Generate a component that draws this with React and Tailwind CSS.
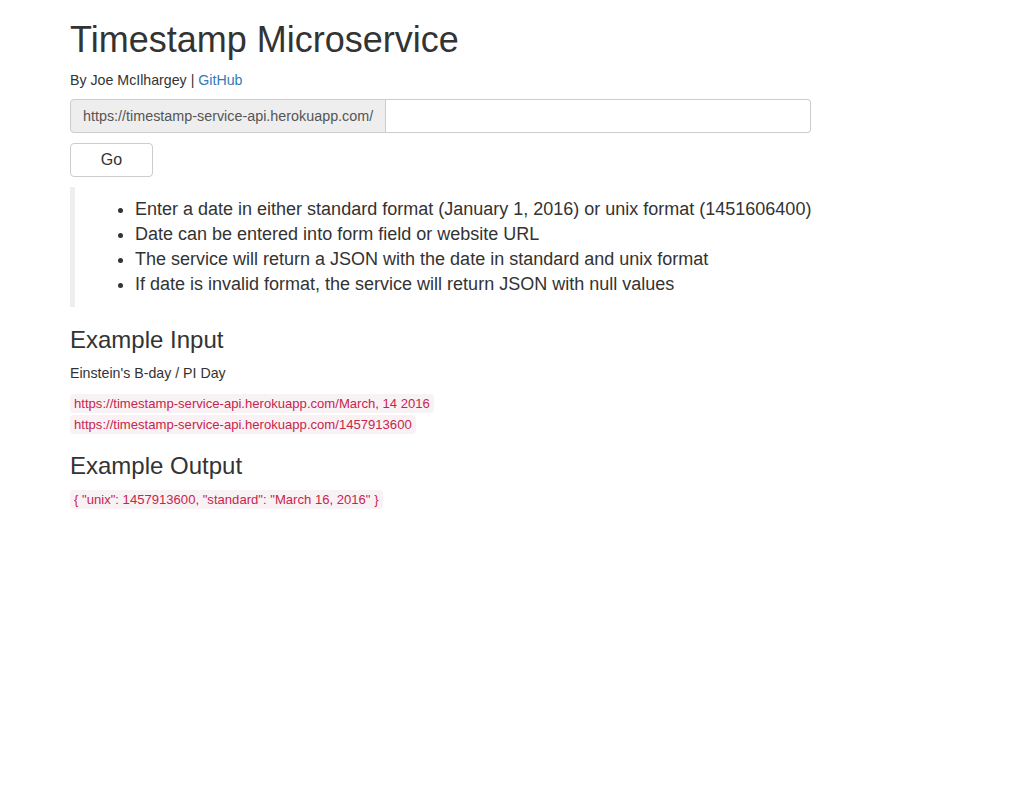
import React, { useState } from 'react';

const sans = { fontFamily: '"Liberation Sans", Arial, sans-serif' };

const rules = [
    'Enter a date in either standard format (January 1, 2016) or unix format (1451606400)',
    'Date can be entered into form field or website URL',
    'The service will return a JSON with the date in standard and unix format',
    'If date is invalid format, the service will return JSON with null values',
];

function Code({ children }) {
    return (
        <code className="rounded bg-[#f9f2f4] px-1 py-[2px] text-[13.1px] text-[#c7254e]" style={sans}>
            {children}
        </code>
    );
}

export default function App() {
    const [value, setValue] = useState('');

    return (
        <div className="min-h-[800px] bg-white text-sm leading-[20px] text-[#333]" style={sans}>
            <div className="ml-[70px] w-[900px]">
                <h1 className="mt-5 mb-2.5 text-[36px] leading-[39.6px] font-normal">Timestamp Microservice</h1>
                <p className="mb-[9px] text-[14.2px]">
                    By Joe McIlhargey | <a href="#" className="text-[#337ab7]">GitHub</a>
                </p>

                <div className="flex h-[34px] w-[741px]">
                    <span className="flex items-center rounded-l border border-[#ccc] bg-[#eee] px-3 text-[14.35px] text-[#555]">
                        https://timestamp-service-api.herokuapp.com/
                    </span>
                    <input
                        value={value}
                        onChange={(e) => setValue(e.target.value)}
                        className="flex-1 rounded-r border border-l-0 border-[#ccc] px-3 text-[#555] outline-none"
                    />
                </div>

                <button
                    type="button"
                    className="mt-[10px] flex h-[34px] w-[83px] items-center justify-center rounded border border-[#ccc] bg-white text-base"
                >
                    Go
                </button>

                <blockquote className="mt-[10px] mb-5 border-l-[5px] border-[#eee] px-5 py-2.5 text-[18px] leading-[25px]">
                    <ul className="list-disc pl-10">
                        {rules.map((r) => (
                            <li key={r} className="whitespace-nowrap">{r}</li>
                        ))}
                    </ul>
                </blockquote>

                <h3 className="mt-5 mb-2.5 text-2xl leading-[26.4px] font-normal">Example Input</h3>
                <p className="mb-2.5 text-[14.2px]">Einstein's B-day / PI Day</p>
                <div>
                    <Code>https://timestamp-service-api.herokuapp.com/March, 14 2016</Code>
                    <br />
                    <Code>https://timestamp-service-api.herokuapp.com/1457913600</Code>
                </div>

                <h3 className="mt-[18px] mb-2.5 text-2xl leading-[26.4px] font-normal">Example Output</h3>
                <Code>{'{ "unix": 1457913600, "standard": "March 16, 2016" }'}</Code>
            </div>
        </div>
    );
}
